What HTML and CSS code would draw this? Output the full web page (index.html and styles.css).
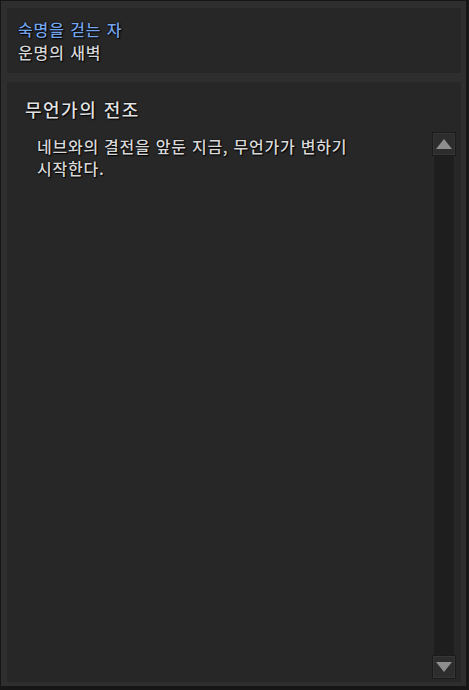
FILE: index.html
```html
<!DOCTYPE html>
<html lang="ko">
<head>
<meta charset="utf-8">
<link rel="stylesheet" href="styles.css">
</head>
<body>
<div class="frame">
  <header class="head">
    <div class="quest-line">숙명을 걷는 자</div>
    <div class="chapter">운명의 새벽</div>
  </header>
  <section class="content">
    <div class="text">
      <h1 class="title">무언가의 전조</h1>
      <p class="desc">네브와의 결전을 앞둔 지금, 무언가가 변하기<br>시작한다.</p>
    </div>
    <div class="scrollbar">
      <div class="sb-btn"><span class="arrow up"></span></div>
      <div class="sb-track"></div>
      <div class="sb-btn"><span class="arrow down"></span></div>
    </div>
  </section>
</div>
</body>
</html>
```
FILE: styles.css
```css
html, body {
  margin: 0;
  padding: 0;
  background: #141414;
}
body {
  width: 469px;
  height: 690px;
  font-family: "Noto Sans CJK KR", "Noto Sans", sans-serif;
  font-weight: 500;
}
.frame {
  box-sizing: border-box;
  width: 469px;
  height: 690px;
  border-style: solid;
  border-color: #161616;
  border-width: 1px 3px 4px 1px;
  background: #2e2e2e;
  padding: 7px 5px 4px 6px;
  display: flex;
  flex-direction: column;
  gap: 9px;
}
.head {
  height: 65px;
  box-sizing: border-box;
  background: #272727;
  padding: 10px 0 0 11px;
}
.quest-line, .chapter {
  font-size: 16px;
  line-height: 23px;
  letter-spacing: 0.9px;
  text-shadow: 0 0 2px #000, 1px 1px 1px #000;
}
.quest-line { color: #74a4ea; }
.chapter { color: #d6d6d6; }
.content {
  flex: 1;
  background: #272727;
  display: flex;
}
.text {
  flex: 1;
  padding: 14px 0 0 18px;
}
.title {
  margin: 0;
  font-size: 18px;
  font-weight: 500;
  line-height: 26px;
  letter-spacing: 1.5px;
  color: #e2e2e2;
  text-shadow: 0 0 2px #000, 1px 1px 1px #000;
}
.desc {
  margin: 13px 0 0 12px;
  font-size: 16px;
  line-height: 22px;
  letter-spacing: 0.75px;
  color: #d8d8d8;
  text-shadow: 0 0 2px #000, 1px 1px 1px #000;
}
.scrollbar {
  width: 24px;
  margin: 50px 5px 3px 0;
  display: flex;
  flex-direction: column;
  align-items: center;
}
.sb-btn {
  box-sizing: border-box;
  width: 24px;
  height: 24px;
  background: #2d2d2d;
  border: 1px solid #1b1b1b;
  box-shadow: inset 0 0 0 1px #353535;
  display: flex;
  align-items: center;
  justify-content: center;
}
.sb-track {
  flex: 1;
  width: 20px;
  background: #1e1e1e;
}
.arrow {
  width: 0;
  height: 0;
  border-left: 8px solid transparent;
  border-right: 8px solid transparent;
}
.arrow.up { border-bottom: 10px solid #8e8e8e; }
.arrow.down { border-top: 10px solid #8e8e8e; }
```
